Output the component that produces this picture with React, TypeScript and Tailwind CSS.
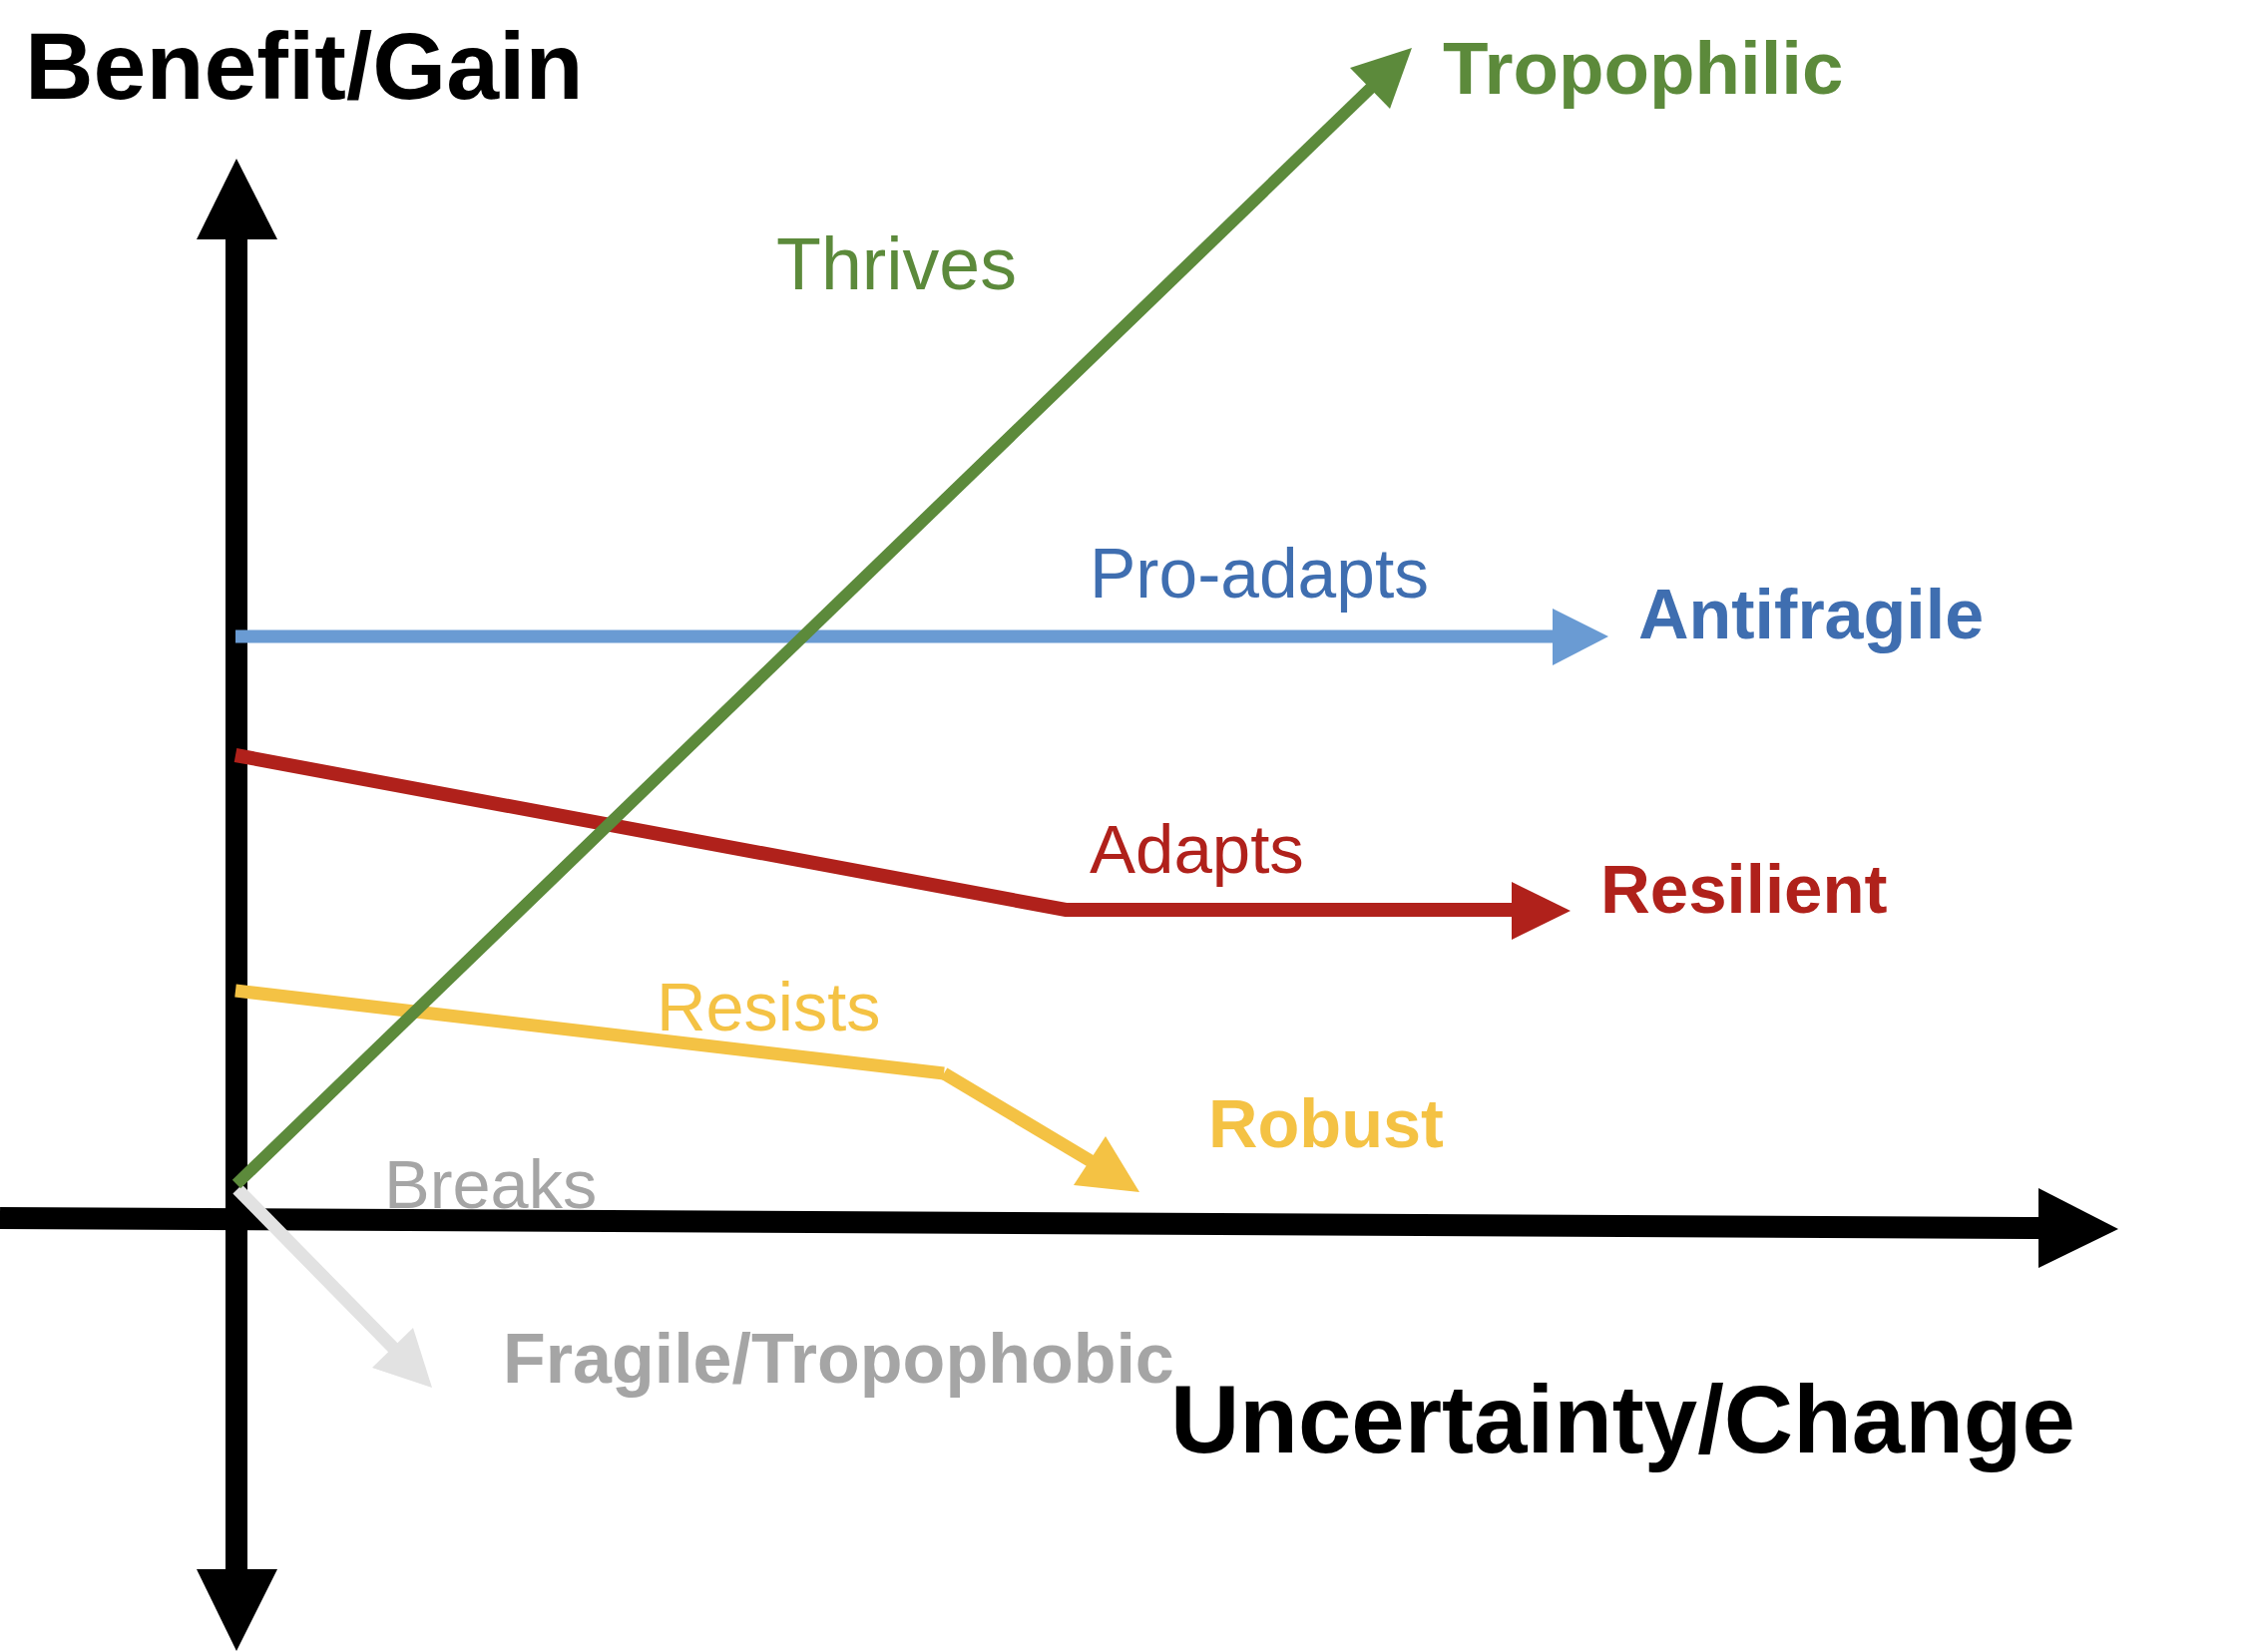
type Label = {
  text: string;
  x: number;
  y: number;
  className: string;
};

// baseline positions measured off the original slide
const LABELS: Label[] = [
  { text: "Benefit/Gain", x: 25, y: 99, className: "text-[95px] font-bold fill-black" },
  { text: "Tropophilic", x: 1446, y: 94, className: "text-[74.5px] font-bold fill-[#5c8a3b]" },
  { text: "Thrives", x: 778, y: 290, className: "text-[73.5px] fill-[#5c8a3b]" },
  { text: "Pro-adapts", x: 1092, y: 599, className: "text-[69.5px] fill-[#3f6eb0]" },
  { text: "Antifragile", x: 1642, y: 640, className: "text-[70px] font-bold fill-[#3f6eb0]" },
  { text: "Adapts", x: 1092, y: 875, className: "text-[69px] fill-[#b0211b]" },
  { text: "Resilient", x: 1604, y: 915, className: "text-[69px] font-bold fill-[#b0211b]" },
  { text: "Resists", x: 658, y: 1033, className: "text-[68.5px] fill-[#f4c244]" },
  { text: "Robust", x: 1211, y: 1150, className: "text-[68.5px] font-bold fill-[#f4c244]" },
  { text: "Breaks", x: 385, y: 1211, className: "text-[68.5px] fill-[#a5a5a5]" },
  { text: "Fragile/Tropophobic", x: 504, y: 1386, className: "text-[70px] font-bold fill-[#a5a5a5]" },
  { text: "Uncertainty/Change", x: 1173, y: 1456, className: "text-[96px] font-bold fill-black" },
];

const Diagram = () => (
  <svg
    viewBox="0 0 2262 1656"
    className="block h-[1656px] w-[2262px] font-['Liberation_Sans',Arial,sans-serif]"
  >
    {/* axes */}
    <line x1={237} y1={236} x2={237} y2={1577} className="stroke-black" strokeWidth={22} />
    <polygon points="237,159 197,240 278,240" className="fill-black" />
    <polygon points="237,1655 197,1573 278,1573" className="fill-black" />
    <line x1={0} y1={1221} x2={2047} y2={1231} className="stroke-black" strokeWidth={22} />
    <polygon points="2123,1232 2043,1191 2043,1271" className="fill-black" />

    {/* fragile */}
    <line x1={238} y1={1192} x2={396} y2={1353} className="stroke-[#e2e2e2]" strokeWidth={13} />
    <polygon points="433,1391 373,1371 414,1331" className="fill-[#e2e2e2]" />

    {/* robust */}
    <line x1={236} y1={993} x2={946} y2={1076} className="stroke-[#f4c244]" strokeWidth={13} />
    <line x1={946} y1={1076} x2={1095} y2={1165} className="stroke-[#f4c244]" strokeWidth={13} />
    <polygon points="1142,1195 1076,1188 1108,1139" className="fill-[#f4c244]" />

    {/* resilient */}
    <polyline
      points="236,757 1068,912 1520,912"
      fill="none"
      className="stroke-[#b0211b]"
      strokeWidth={14}
    />
    <polygon points="1574,913 1515,884 1515,942" className="fill-[#b0211b]" />

    {/* antifragile */}
    <line x1={236} y1={638} x2={1560} y2={638} className="stroke-[#6a9bd3]" strokeWidth={13} />
    <polygon points="1612,638 1556,610 1556,667" className="fill-[#6a9bd3]" />

    {/* tropophilic */}
    <line x1={237} y1={1187} x2={1376} y2={86} className="stroke-[#5c8a3b]" strokeWidth={12} />
    <polygon points="1415,48 1353,68 1393,109" className="fill-[#5c8a3b]" />

    {LABELS.map((l) => (
      <text key={l.text} x={l.x} y={l.y} className={l.className}>
        {l.text}
      </text>
    ))}
  </svg>
);

export default function App() {
  return (
    <div className="h-[1656px] w-[2262px] overflow-hidden bg-white">
      <Diagram />
    </div>
  );
}
